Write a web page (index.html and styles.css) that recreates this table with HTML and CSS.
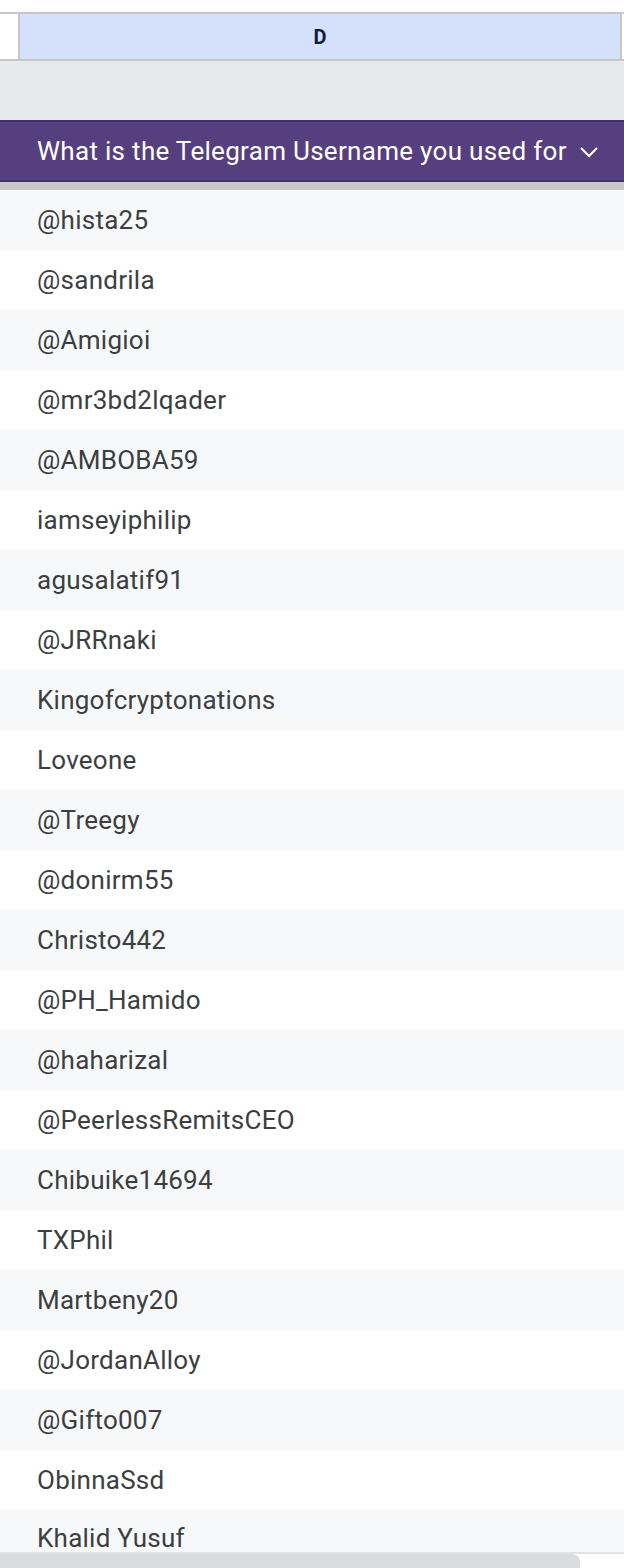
FILE: index.html
```html
<!DOCTYPE html>
<html>
<head>
<meta charset="utf-8">
<link rel="stylesheet" href="styles.css">
</head>
<body>
<div class="page">
  <div class="col-head">
    <div class="corner"></div>
    <div class="col-letter">D</div>
    <div class="col-rest"></div>
  </div>
  <div class="gap-band"></div>
  <div class="field-head">
    <span class="field-title">What is the Telegram Username you used for</span>
    <svg class="chev" width="20" height="12" viewBox="0 0 20 12"><path d="M2 2 L10 10 L18 2" fill="none" stroke="#fff" stroke-width="2"/></svg>
  </div>
  <div class="shadow"></div>
  <div class="rows">
    <div class="row alt">@hista25</div>
    <div class="row">@sandrila</div>
    <div class="row alt">@Amigioi</div>
    <div class="row">@mr3bd2lqader</div>
    <div class="row alt">@AMBOBA59</div>
    <div class="row">iamseyiphilip</div>
    <div class="row alt">agusalatif91</div>
    <div class="row">@JRRnaki</div>
    <div class="row alt">Kingofcryptonations</div>
    <div class="row">Loveone</div>
    <div class="row alt">@Treegy</div>
    <div class="row">@donirm55</div>
    <div class="row alt">Christo442</div>
    <div class="row">@PH_Hamido</div>
    <div class="row alt">@haharizal</div>
    <div class="row">@PeerlessRemitsCEO</div>
    <div class="row alt">Chibuike14694</div>
    <div class="row">TXPhil</div>
    <div class="row alt">Martbeny20</div>
    <div class="row">@JordanAlloy</div>
    <div class="row alt">@Gifto007</div>
    <div class="row">ObinnaSsd</div>
    <div class="row alt last">Khalid Yusuf</div>
  </div>
  <div class="scroll-track"><div class="scroll-thumb"></div></div>
</div>
</body>
</html>
```
FILE: styles.css
```css
html, body {
  margin: 0;
  padding: 0;
  background: #ffffff;
}
body {
  font-family: Roboto, "Liberation Sans", Arial, sans-serif;
  width: 624px;
  height: 1568px;
  overflow: hidden;
}
.page {
  padding-top: 12px;
}
.col-head {
  display: flex;
  height: 49px;
  border-top: 2px solid #c7c7c7;
  border-bottom: 2px solid #c7c7c7;
  box-sizing: border-box;
}
.corner {
  width: 18px;
  background: #ffffff;
  border-right: 2px solid #c7c7c7;
}
.col-letter {
  flex: 0 0 600px;
  background: #d5e1fb;
  display: flex;
  align-items: center;
  justify-content: center;
  font-weight: 700;
  font-size: 20px;
  color: #0d1b44;
  border-right: 2px solid #c7c7c7;
}
.col-rest {
  flex: 1;
  background: #ffffff;
}
.gap-band {
  height: 59px;
  background: #e8e9eb;
}
.field-head {
  height: 62px;
  box-sizing: border-box;
  background: #563f7f;
  border-top: 2px solid #42306a;
  border-bottom: 2px solid #42306a;
  display: flex;
  align-items: center;
  padding-left: 37px;
  gap: 12px;
  white-space: nowrap;
  overflow: hidden;
}
.field-title {
  color: #ffffff;
  font-size: 26px;
  letter-spacing: 0.3px;
}
.chev {
  flex: 0 0 auto;
  margin-top: 2px;
}
.shadow {
  height: 8px;
  background: #c8c8c8;
}
.rows {
  display: flex;
  flex-direction: column;
}
.row {
  height: 60px;
  display: flex;
  align-items: center;
  padding-left: 37px;
  font-size: 26px;
  letter-spacing: 0.25px;
  color: #3c3e41;
  background: #ffffff;
}
.row.alt {
  background: #f7f8fa;
}
.row.last {
  height: 44px;
  padding-top: 14px;
  box-sizing: border-box;
  border-bottom: 2px solid #e1e3e1;
}
.scroll-track {
  height: 12px;
  background: #ffffff;
}
.scroll-thumb {
  width: 580px;
  height: 14px;
  background: #dadce0;
  border-top-right-radius: 8px;
}
```
